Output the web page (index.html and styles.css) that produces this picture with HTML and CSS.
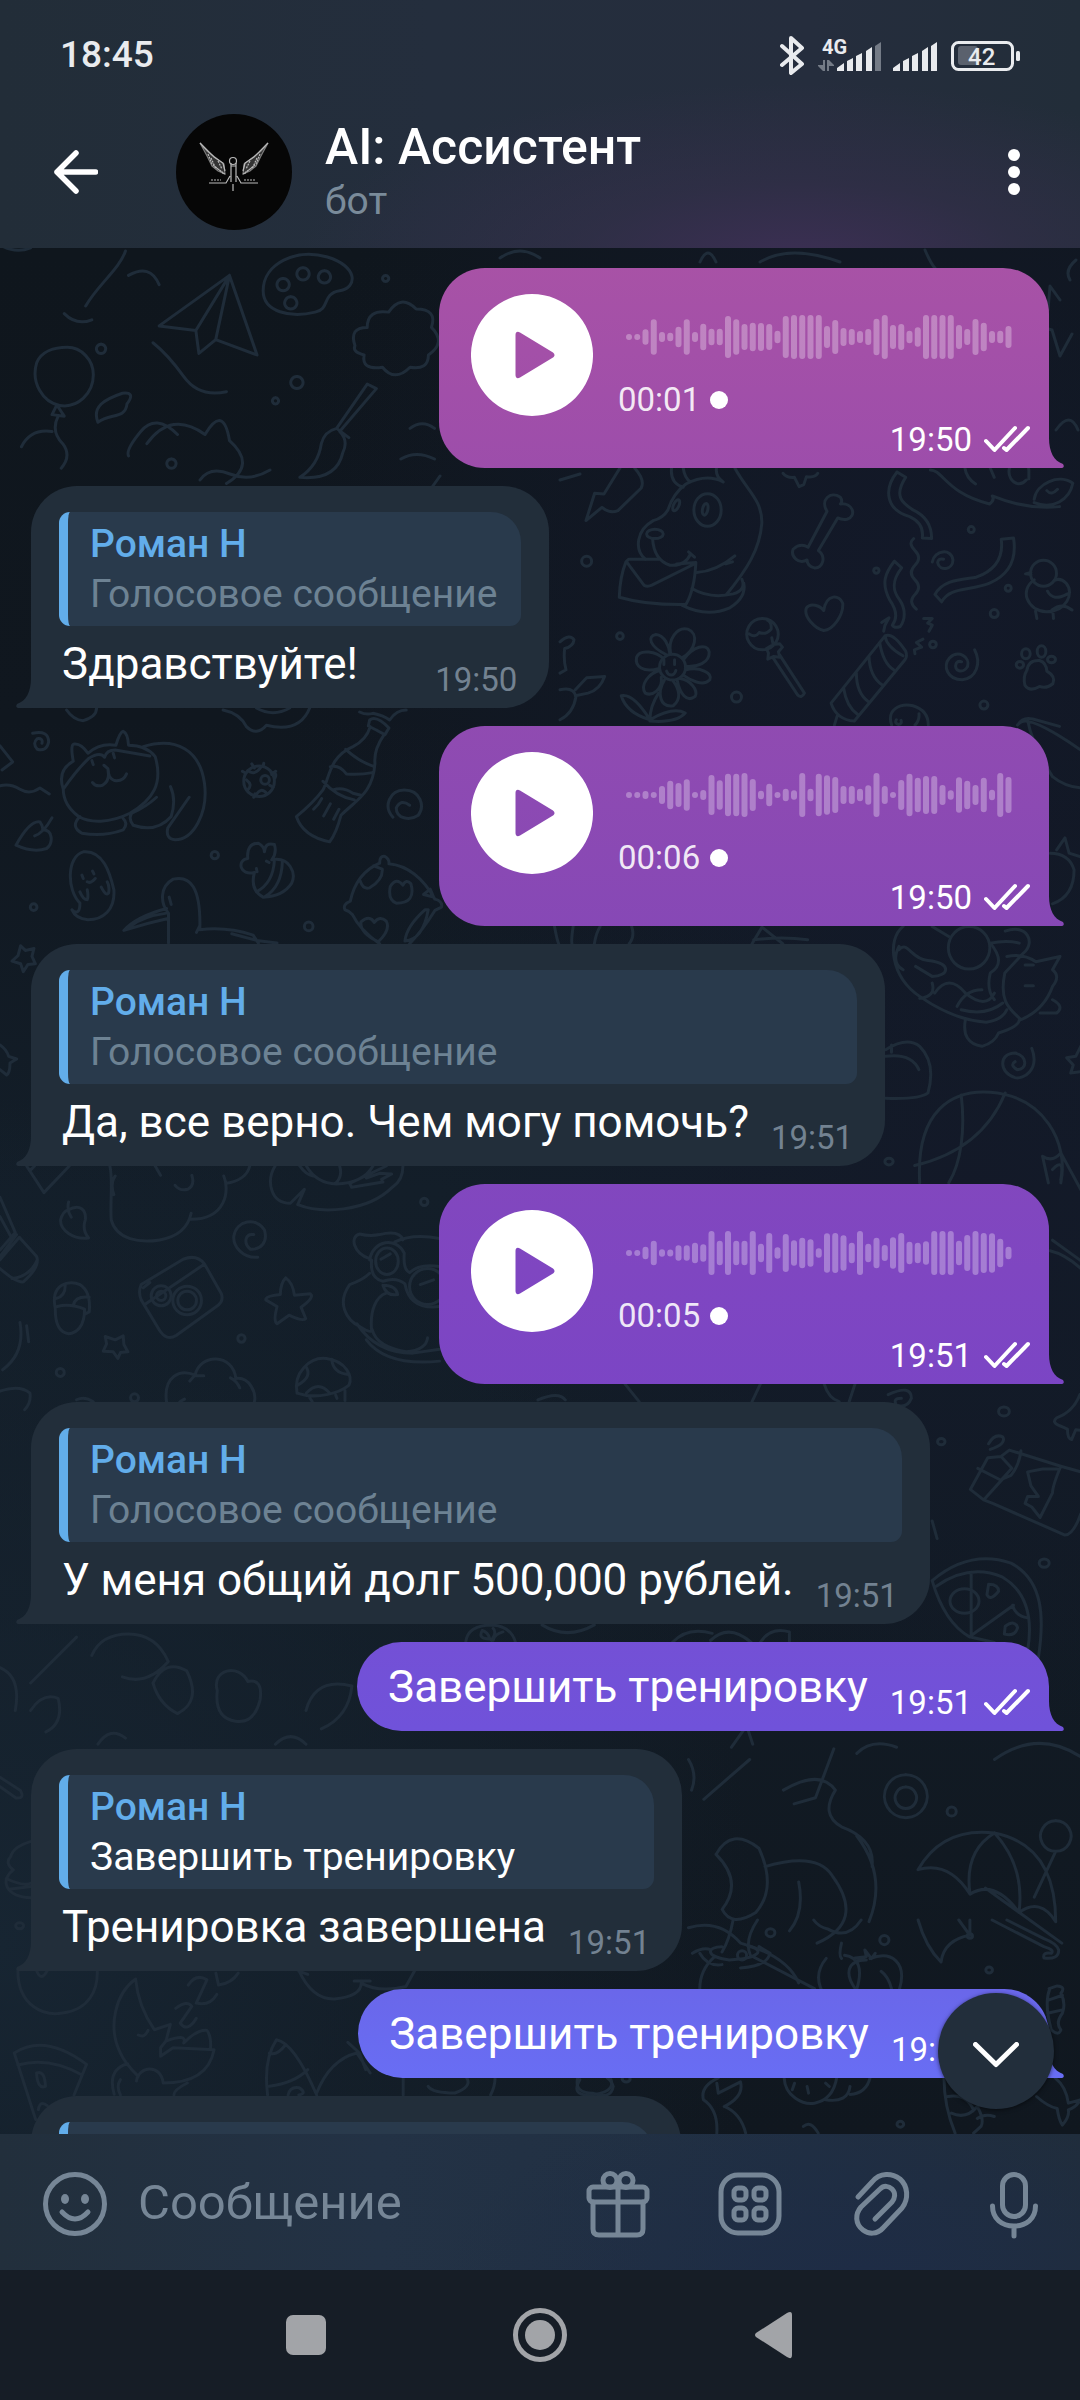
FILE: index.html
```html
<!DOCTYPE html>
<html lang="ru">
<head>
<meta charset="utf-8">
<meta name="viewport" content="width=device-width, initial-scale=1">
<title>AI: Ассистент</title>
<link rel="stylesheet" href="styles.css">
</head>
<body>
<svg class="sprite" aria-hidden="true">
  <symbol id="play" viewBox="0 0 122 122"><path fill="#fff" fill-rule="evenodd" d="M61 0a61 61 0 1 1 0 122a61 61 0 1 1 0-122zM49 38.500C46.500 37 44.500 38 44.500 41V81C44.500 84 46.500 85 49 83.500L82 63.500C84 62 84 60 82 58.500Z"/></symbol>
  <symbol id="checks" viewBox="0 0 46 28"><path fill="none" stroke="#fff" stroke-width="4" stroke-linecap="round" stroke-linejoin="round" d="M2 16L10.500 25L31 3M20 23L22.500 25L44 3"/></symbol>
</svg>

<header class="top">
  <div class="status">
    <time class="clock">18:45</time>
    <svg class="status-icons" viewBox="780 30 242 46" role="img" aria-label="Состояние сети и батареи">
      <path fill="none" stroke="#e9ebee" stroke-width="4" stroke-linejoin="round" stroke-linecap="round" d="M782 44L802 62L791 71V36L802 46L782 63"/>
      <text class="net" x="822" y="52">4G</text>
      <g fill="#747b86"><path d="M818 64L823 69H825V58H823V63H818ZM834 63L829 58H827V69H829V64H834Z"/><path d="M875 44L881 40V69H875Z"/></g>
      <g fill="#e9ebee">
        <path d="M837 66L844 61V69H837ZM847 59L853 56V69H847ZM856 54L862 51V69H856ZM866 49L872 45V69H866Z"/>
        <path d="M893 66L900 61V69H893ZM903 59L909 56V69H903ZM912 54L918 51V69H912ZM922 49L928 45V69H922ZM931 44L937 40V69H931Z"/>
        <rect x="1016" y="49" width="4" height="10" rx="1.500"/>
      </g>
      <rect x="958" y="44" width="20" height="19" rx="3" fill="#5a616d"/>
      <rect x="952.500" y="40.500" width="60" height="27" rx="6" fill="none" stroke="#e9ebee" stroke-width="3"/>
      <text class="charge" x="968" y="63">42</text>
    </svg>
  </div>
  <div class="bar">
    <button class="back" aria-label="Назад"><svg viewBox="0 0 44 44"><path d="M41.500 22H3M22 3L3 22L22 41" fill="none" stroke="#fff" stroke-width="5.500" stroke-linecap="round" stroke-linejoin="round"/></svg></button>
    <svg class="avatar" viewBox="0 0 116 116" aria-hidden="true">
      <circle cx="58" cy="58" r="58" fill="#060606"/>
      <g fill="none" stroke="#b9b9b9" stroke-width="1.200">
        <path fill="#8a8a8a" fill-opacity=".35" stroke-opacity=".6" d="M24 29L31 42L36 52L42 57L49 60L48 50L40 44L31 37ZM92 29L85 42L80 52L74 57L67 60L68 50L76 44L85 37Z"/>
        <path d="M24 29L38 43L47 49L49 57M92 29L78 43L69 49L67 57"/>
        <path d="M32 40L36 50L48 60M35 44L39 53L49 60M42 47L46 55M84 40L80 50L68 60M81 44L77 53L67 60M74 47L70 55" stroke-dasharray="2 1"/>
        <circle cx="57" cy="47" r="3.500"/><path d="M55 52H60M55 49V68M60 49V68M54 62L50 69H33M61 62L65 69H82M57 70V77"/>
        <path d="M35 66H45M68 66H80" stroke-dasharray="2 1"/>
      </g>
    </svg>
    <div class="who"><h1>AI: Ассистент</h1><p>бот</p></div>
    <button class="more" aria-label="Меню"><svg viewBox="0 0 12 46"><g fill="#fff"><circle cx="6" cy="6" r="6"/><circle cx="6" cy="23" r="6"/><circle cx="6" cy="40" r="6"/></g></svg></button>
  </div>
</header>

<main class="chat">
  <svg class="doodles" viewBox="0 248 1080 1886" preserveAspectRatio="xMidYMin slice" aria-hidden="true">
    <g transform="scale(1.530)">
      <path d="M24 237c-4 13 4 26 15 28c12 2 22-8 22-20c0-10-8-18-17-18s-17 3-20 10M37 265l-3 6l8 1l-4-6M38 272q-5 10 3 18q6 8-1 16M0 160q10 6 20 2M56 200c8-14 22-24 26-36M42 205q8 8 18 4M64 276c8-6 18-2 19-12q6-8-3-7c-12 4-20 9-16 19"/>
      <path d="M172 190c0-18 22-28 42-22s20 20 8 22s-6 12-16 14c-16 4-34 0-34-14M185 182a4 4 0 1 0 .1 0M198 175a4 4 0 1 0 .1 0M212 177a4 4 0 1 0 .1 0M190 194a4 4 0 1 0 .1 0"/>
      <path d="M104 213L150 180L168 232L141 222L130 231L128 216ZM128 216L150 180L141 222M100 224q10 8 20 22t28 10"/>
      <path d="M232 226q-4-12 8-12q0-12 14-10q8-12 18-2q14 0 10 12q10 10-2 18q0 10-12 8q-10 10-18 0q-14 2-12-8q-8-2-6-6"/>
      <path d="M240 251l-20 29q-8 2-10 10q-2 14-14 22q24 2 28-16q4-8-2-14l24-28zM220 280l8 6M194 246a4 4 0 1 0 .1 0M14 292q6-12 20-10M96 290q16-22 38-6q12-20 16 4q18 16-2 28M112 300a3 3 0 1 0 .1 0M268 280q8-6 16 0M262 300q10-6 22 0M116 284q-14-14-24-2t-8 16M84 180q14-8 20 6"/>
      <path d="M252 180a2 2 0 1 0 .1 0M66 225a3 3 0 1 0 .1 0M180 260a2 2 0 1 0 .1 0"/>
    </g>
    <g transform="translate(560 460) scale(.333)">
      <path d="M180 24L132 102L104 100L78 182L126 142Q150 162 174 152L244 84Q256 60 224 24"/>
      <path d="M490 66Q440 40 378 72Q340 100 324 150Q310 174 280 182C230 210 222 268 256 298M525 24C560 90 608 120 606 190C600 270 560 330 500 404M410 338Q470 334 525 288M498 312L518 306M335 24Q330 70 370 82M370 24Q374 54 392 66M470 24Q466 50 490 66"/>
      <ellipse cx="443" cy="150" rx="41" ry="49"/><ellipse cx="436" cy="148" rx="8" ry="18" transform="rotate(12 436 148)"/><ellipse cx="349" cy="136" rx="8" ry="18" transform="rotate(25 349 136)"/><ellipse cx="285" cy="222" rx="25" ry="14"/>
      <path d="M278 236Q282 300 330 316Q376 320 392 282M386 276L404 292M206 298H300M350 312L408 308Q404 390 378 434Q260 436 178 412Q180 350 198 306L206 298M200 306L252 376Q262 382 276 376L408 310M396 386Q450 418 520 402Q560 390 546 358M366 436Q440 474 510 444Q560 412 552 370"/>
      <path d="M745 262L802 154C780 120 812 92 842 112Q850 124 842 132C880 128 892 168 862 178Q846 180 834 174L776 272C800 290 790 326 764 324Q742 318 742 300C716 314 692 290 700 268Q722 248 745 262"/>
      <path d="M670 40Q680 54 704 52L718 80L732 74L740 50Q766 54 774 40M1012 36L1038 52C1000 110 1030 130 1060 150Q1116 176 1116 236L1088 234Q1094 190 1050 170C980 150 970 90 1012 36M1062 236q-18 14 4 36t0 44t0 44t0 44t4 44M1004 304L1026 324C990 370 1004 400 1020 420C1040 450 1036 480 1022 500Q1004 506 998 496C1018 470 1004 440 990 420C964 370 976 340 1004 304"/>
      <path d="M1325 238L1362 234C1374 310 1336 350 1290 370C1230 394 1170 380 1146 426L1126 404C1150 360 1200 360 1250 352C1310 330 1332 290 1325 238M1118 306C1124 270 1176 264 1180 300C1180 330 1140 336 1134 308Q1136 294 1152 298"/>
      <path d="M792 452C800 400 840 404 849 430C852 466 820 510 792 512C766 506 730 470 740 444C752 428 780 436 792 452M608 476a47 47 0 1 0 .1 0M568 522q18 14 30-4q20 8 36-10q2-20-10-26M636 534l4 20l20-2l8 10l-12 14l4 16l-18-2l-18 8l2-18l-6-14l14-8M640 594l74 112q12 10 20-6L660 586"/>
      <circle cx="338" cy="622" r="39"/>
      <path d="M318 584C270 560 260 530 288 524C314 526 328 560 330 582M332 580C324 540 350 500 384 508C416 520 410 570 366 594M372 598C400 560 440 548 448 576C450 610 410 622 380 620M378 630C420 620 460 640 450 660C430 682 390 660 370 646M360 656C390 660 416 690 406 710C380 730 360 700 352 662M340 664C360 690 364 720 340 738C300 744 290 700 314 660M304 652C310 690 276 710 256 700C240 676 266 640 300 632M298 626C250 640 224 620 230 592C240 566 290 576 310 596M312 600v14M344 600v14M320 634q4 12 14 12t14-14"/>
      <path d="M976 528Q1000 516 1038 574Q1044 590 1036 600L884 784Q830 780 814 730L976 528Q980 560 1030 588M960 548Q970 610 1002 630M928 590Q930 650 968 676M890 640Q890 700 926 726M852 686Q860 740 894 764M832 770L824 796M966 488l22-14l-12 22l-4 18M1092 476h26l-14 14l14 6l-10 18M1090 538l-20 10l16 14l-22 8l2 12"/>
      <path d="M1245 570C1266 610 1250 656 1208 660C1164 660 1148 620 1170 594C1196 570 1232 590 1224 620C1210 644 1180 634 1190 610Q1196 602 1206 606"/>
      <circle cx="1452" cy="340" r="39"/><path d="M1424 360C1380 390 1400 450 1460 456C1520 456 1546 400 1520 370Q1502 352 1484 362M1414 338L1398 342L1414 344M1464 394Q1480 426 1524 402M1428 454l4 22M1480 454l2 22M1400 60a30 36 0 1 1 8-30v26M1424 118C1430 70 1500 40 1540 70C1530 120 1480 150 1424 128M1112 30C1150 30 1160 100 1290 132Q1306 120 1298 108Q1400 150 1500 140M1216 24q4 30 32 48M1292 24l12 28M1462 92q14 16 32-4"/>
      <path d="M1402 632Q1406 600 1440 602Q1460 608 1462 634Q1490 650 1480 672Q1460 688 1440 680Q1410 698 1396 676Q1390 650 1402 632"/><ellipse cx="1381" cy="615" rx="11" ry="10"/><ellipse cx="1399" cy="582" rx="13" ry="15"/><ellipse cx="1446" cy="575" rx="13" ry="17"/><ellipse cx="1476" cy="599" rx="12" ry="10"/>
      <path d="M996 796C980 750 1020 730 1060 738Q1106 752 1106 796M1010 780q-6 10 6 14q12-2 8-12M1078 762q2 20-12 34M1374 796Q1390 770 1420 778L1500 800M270 780Q200 760 184 708Q220 700 270 780Q270 740 296 700M270 780Q340 740 376 760Q350 790 270 784M0 546Q30 520 42 540Q40 560 14 566Q10 600 18 630L0 640M0 690Q40 680 48 710Q40 760 0 780M46 690L80 654L134 650Q120 690 84 700L46 708"/>
      <circle cx="80" cy="304" r="15"/><circle cx="180" cy="529" r="10"/><circle cx="530" cy="712" r="15"/><circle cx="950" cy="332" r="8"/><circle cx="1120" cy="554" r="10"/><circle cx="1235" cy="209" r="9"/><circle cx="1346" cy="385" r="9"/><circle cx="1304" cy="461" r="12"/><circle cx="1273" cy="736" r="12"/>
    </g>
    <g transform="translate(0 700) scale(.333)">
      <path d="M190 268C170 210 210 190 220 184Q210 130 224 132Q244 130 264 160Q300 128 348 136Q360 96 370 94Q384 100 386 136Q440 136 466 170C490 250 460 300 390 340C330 370 270 370 236 350C210 330 190 300 190 268Q230 210 266 176Q300 154 314 172Q320 150 346 150L450 168M430 140C530 110 600 150 614 250C626 340 580 420 526 420Q496 416 504 384L568 292M512 260Q530 300 514 350Q470 400 400 376Q384 356 396 340Q440 320 470 292M240 350Q210 380 246 400Q310 412 370 390Q386 370 370 356M276 182l4 12M340 160l4 14M312 196l12 10q8 36-16 50q-20 6-30-8M324 206q0 30 20 36q26 4 36-20"/>
      <path d="M98 100Q146 90 146 126Q140 156 112 148Q96 130 112 116Q130 114 126 130M0 138L38 186L6 210M0 258Q30 250 60 268T120 264L148 282M48 436Q90 360 120 366Q130 380 128 390C160 390 160 430 140 446Q100 460 48 436M104 408Q130 400 156 354"/>
      <path d="M216 630Q240 650 240 610C200 570 200 470 250 456C310 450 330 520 342 570C346 630 310 660 264 660Q226 656 216 630M246 526l4 10M278 514l4 8M262 546q10 6 24-10M240 576Q250 600 262 600Q266 590 262 570M304 562Q318 590 326 580Q330 560 322 546M506 730V640C480 610 480 560 520 538C570 526 604 560 600 690Q680 680 760 706L776 730M500 626Q410 650 372 692Q440 670 504 656M500 640Q430 650 390 680M508 592l6 22M590 698l10-20M696 702L770 722L832 730"/>
      <circle cx="778" cy="244" r="46"/><circle cx="796" cy="240" r="13"/><path d="M744 212q20 16 38-8M740 240q20 14 4 30M768 288q14-30 34-6M756 192l8 12M792 190l-2 10M828 214l-12 10M820 262l-10-6M762 292l4-10M728 214l10 6M814 218q20 0 12 16"/>
      <path d="M1110 60Q1130 44 1168 84L1156 104Q1140 96 1130 90L1106 78ZM1112 80Q1100 120 1060 140C990 170 990 230 970 270Q940 310 890 350Q910 410 990 426Q1010 400 1024 346C1070 300 1120 280 1126 190Q1122 150 1152 106M1038 148Q1080 186 1124 200M992 200Q1020 194 1040 222Q1080 226 1118 218M970 244Q1010 290 1064 300M1000 270Q1030 260 1060 280L1084 286M966 296q-10 20-24 32M992 312l-20 36M1018 328l-16 30M670 30Q720 40 740 80Q770 110 800 76Q900 100 930 24M770 24Q820 52 870 24M1080 36Q1100 46 1120 40Q1150 46 1170 60Q1190 30 1220 30M200 30Q220 60 250 62Q290 50 290 24"/>
      <path d="M1180 352C1150 320 1170 270 1214 270C1264 270 1276 320 1256 346C1230 364 1190 356 1190 324Q1204 296 1230 316M764 518C720 530 710 480 744 476Q740 430 776 430Q794 440 794 456Q796 426 824 434Q832 460 816 480C870 470 890 520 876 550Q850 590 790 592Q750 570 764 518M824 482Q820 550 770 576M848 484Q846 560 796 590M770 506l2 10M800 484l8 4"/>
      <path d="M1140 490Q1140 466 1156 470Q1170 478 1168 492Q1250 500 1306 598Q1330 604 1326 622L1306 632Q1270 690 1230 732M1140 490Q1070 520 1052 604Q1028 614 1036 630Q1050 634 1058 644Q1080 690 1140 732M1210 556Q1220 536 1234 552Q1250 610 1190 610Q1164 600 1172 560Q1190 530 1210 556M1124 668Q1140 646 1160 664Q1174 690 1136 726Q1080 700 1084 666Q1110 644 1124 668M1082 544Q1090 570 1110 564Q1150 540 1148 508L1122 498M1276 630Q1220 680 1216 724Q1270 720 1286 630ZM1272 584l20-16l10 24ZM62 738l14 14l26-6l-6 24l10 22l-22 2l-14 22l-8-24l-26-8l18-16ZM0 1036Q20 1050 26 1070L50 1078L30 1090Q30 1120 20 1126L0 1110"/>
      <circle cx="645" cy="466" r="11"/><circle cx="927" cy="680" r="13"/><circle cx="101" cy="622" r="10"/>
    </g>
    <g transform="translate(0 1160) scale(.333)">
      <path d="M80 18L132 98L208 18M90 32L104 18M330 18C340 60 330 130 334 180C350 240 420 250 480 240Q560 226 574 160M346 48Q330 70 342 104M466 18l16 28M526 76Q540 94 564 88Q586 76 576 46M672 48C690 90 680 180 570 178M680 70Q740 60 750 18M826 18C800 60 810 130 872 130L914 88L894 134C960 160 1100 160 1180 80Q1210 60 1210 18M900 18Q920 46 940 48M920 18Q950 70 1010 72Q1090 70 1120 18M1020 18Q1030 50 1006 72M1160 18L1050 70L1056 82L1150 66L1146 58L1176 42L1140 40L1100 54"/>
      <path d="M206 126Q200 150 214 172M204 150C240 130 260 150 256 180Q246 210 266 234C220 240 180 210 182 180Q188 156 204 150M0 112L46 218L0 270M0 170L36 236M0 300L58 232L110 290Q122 320 70 366Q50 370 0 326M0 290L50 224M36 356Q90 350 112 300"/>
      <path d="M774 292C730 296 700 260 702 230C710 180 770 170 794 210C806 250 780 270 752 268C730 250 736 220 762 224M424 374L550 298Q590 282 614 312L664 400Q674 424 650 440L530 526Q500 546 478 510L424 420Q414 396 424 374M438 432L612 314M430 384l20-16"/>
      <circle cx="484" cy="408" r="30"/><circle cx="484" cy="408" r="14"/><circle cx="562" cy="422" r="43"/><circle cx="562" cy="422" r="28"/>
      <path d="M166 446C150 370 210 360 240 374Q274 396 268 456L256 462M172 440Q210 430 254 448C254 500 230 520 206 522Q166 516 166 450M168 416Q196 410 196 376M220 436Q226 408 268 412"/>
      <path d="M858 354Q880 370 884 406L932 402Q946 412 904 442L918 476Q910 486 868 466L832 492Q820 484 832 440L798 420Q798 408 842 404Q842 370 858 354M346 540l24-12l2 26l12 22l-22 2l-8 18l-14-20l-30-2l10-22l-4-22Z"/>
      <path d="M60 488Q76 580 8 630M80 498l6 48M0 694Q60 674 90 700Q94 730 74 750M500 726C490 650 540 626 586 646C600 580 700 580 708 656M586 646L570 664M586 648h26M708 656C750 650 770 700 764 726M692 654Q710 662 720 684M540 726l14-8M230 720Q254 708 280 726"/>
      <path d="M892 700C880 640 930 590 980 596C1040 604 1060 650 1048 676C1020 700 950 720 892 700M894 676Q940 650 918 620M996 598Q1000 640 1046 644M920 700Q956 660 990 700M930 714l8 12M1036 692v30M1008 706l4 10"/>
      <path d="M1110 296C1060 280 1050 230 1080 222Q1110 230 1140 224Q1200 210 1210 240M1186 246Q1240 220 1320 236M1110 300C1120 240 1190 230 1214 280Q1210 330 1230 338Q1260 310 1320 320M1116 300Q1110 356 1150 364Q1190 350 1216 372Q1230 450 1320 440M1110 340Q1090 360 1050 374C1010 430 1040 480 1080 500Q1110 520 1116 512C1110 450 1130 410 1160 400M1072 492Q1130 580 1240 580L1320 568M1100 540Q1160 620 1320 604M1118 510Q1130 560 1220 576Q1280 570 1284 534M1150 376Q1190 376 1194 404Q1160 410 1150 376"/>
      <ellipse cx="1162" cy="304" rx="34" ry="40"/><circle cx="1284" cy="380" r="54"/><path d="M1144 298l28-16M1262 374l40-14"/>
      <circle cx="1274" cy="126" r="11"/><circle cx="725" cy="536" r="11"/><circle cx="181" cy="638" r="12"/><circle cx="404" cy="714" r="12"/>
    </g>
    <g transform="translate(430 710) scale(.415 .333)">
      <path d="M1140 650C1100 690 1110 800 1180 860Q1260 930 1340 938Q1380 930 1390 900M1130 720C1150 690 1160 750 1200 752C1260 760 1250 800 1210 800L1170 770M1130 710Q1110 760 1140 780M1180 866Q1220 860 1210 820M1210 650L1250 680M1350 700Q1390 690 1420 700M1386 664C1440 640 1460 700 1430 730Q1400 770 1385 790C1370 880 1400 900 1424 930Q1480 900 1500 830Q1520 800 1500 780L1518 740L1460 756Q1430 730 1390 740M1290 930Q1280 1000 1330 1010Q1360 1000 1370 970Q1420 950 1420 930M1216 850Q1250 790 1290 850Q1340 900 1360 850M1270 890Q1290 840 1330 840M1280 900Q1340 920 1380 880M1350 700Q1390 760 1350 790Q1340 840 1360 870M1500 870Q1530 890 1510 910L1470 910M1434 766h20M1434 828h20"/>
      <ellipse cx="1299" cy="714" rx="50" ry="64"/>
      <path d="M1098 1040Q1160 1030 1178 1080M1098 1020Q1150 980 1180 1010Q1220 1060 1200 1150Q1180 1170 1098 1166M1112 1006v22M1450 1016C1470 1080 1430 1110 1410 1104C1370 1090 1370 1030 1410 1030C1440 1040 1440 1080 1415 1080Q1396 1066 1410 1056M1568 1010L1556 1040L1534 1044L1550 1066L1544 1090L1568 1086M1180 1420C1170 1200 1260 1140 1350 1148C1480 1160 1540 1300 1520 1420M1280 1156C1290 1260 1280 1360 1250 1420M1386 1150Q1330 1320 1168 1368M1476 1340Q1500 1360 1520 1330L1568 1440M1476 1340L1490 1420"/>
      <circle cx="1106" cy="1356" r="10"/>
      <path d="M300 650Q306 690 310 702M345 650Q340 690 342 702M396 702Q400 670 410 650M486 650Q494 680 480 702M776 702L800 652L850 702M780 690Q850 680 910 690M1494 430Q1540 430 1552 480Q1552 560 1500 582M1510 420L1530 384L1540 430L1566 440M1420 40Q1440 10 1568 120M1440 30Q1450 100 1500 200Q1530 230 1568 234M1500 1380Q1530 1340 1520 1410"/>
    </g>
    <g transform="translate(430 1170) scale(.415 .351)">
      <path d="M1494 230Q1530 240 1568 280M1500 200L1568 258M1566 640Q1550 690 1510 706Q1496 720 1520 730L1536 738Q1536 766 1546 768L1556 740L1568 742M1346 780Q1360 750 1380 760Q1390 780 1350 796M1344 820L1376 816L1396 798L1520 844L1568 860M1344 820L1302 910L1334 940L1356 950L1530 1040Q1550 1040 1568 980M1334 940L1380 880L1400 870Q1420 840 1424 800M1320 850L1376 884L1402 850L1376 816M1520 844Q1500 900 1500 920L1470 990L1450 960L1434 950L1440 930L1466 930L1448 900L1440 860L1476 852H1512M1210 1170Q1300 1080 1400 1120C1480 1170 1480 1280 1466 1390M1220 1186Q1300 1120 1380 1160C1450 1210 1450 1300 1440 1370M1210 1170Q1240 1290 1300 1330L1360 1346M1304 1146V1330M1300 1330L1406 1240M1346 1180Q1370 1180 1370 1200Q1350 1230 1342 1210ZM1386 1300Q1410 1280 1416 1304Q1410 1330 1384 1322ZM1404 1240Q1410 1270 1440 1276M1210 1000L1222 1050"/><circle cx="1288" cy="1228" r="35"/><circle cx="1383" cy="688" r="13"/><circle cx="1232" cy="774" r="9"/><circle cx="1480" cy="1120" r="12"/>
      <path d="M86 1346Q90 1296 150 1296Q196 1300 206 1346M126 1312q14 4 18 24q-30 0-18-24M152 1306q10 10-4 34M176 1316q-20 6-24 24M584 1346Q620 1300 680 1320M676 1340Q720 1290 774 1346M796 1346Q820 1300 866 1316V1346M270 1296Q330 1340 396 1296M260 655Q310 630 326 655M470 610L504 660M796 610L776 660M950 610Q960 650 986 660M1024 610L1010 660M1104 640Q1160 610 1160 650Q1150 680 1124 670Q1114 650 1136 650"/>
    </g>
    <g transform="scale(1.530)">
      <path d="M0 1090q14 6 10 28M20 1100l30-30M60 1082q6-14 24-14t26 18q-14 16-30 10M142 1105c-4-14 14-18 20-6q10-2 8 12q-4 16-16 14q-14-2-12-20M200 1118q6-22 30-16q-2 20-20 28M100 1100q8-16 22-8q10 20-6 28q-12-6-16-20M20 1118q8-12 18-8q4 16-8 22M180 1140q10-10 20 0M64 1140q8-12 18-4"/>
      <path d="M478 1142l10-14l4 12M545 1143l-12 32l-14 4M560 1146q10-10 26-4M592 1160a14 14 0 1 0 .1 0M592 1168a7 7 0 1 0 .1 0M460 1176l30-26M650 1150q28-20 56-2M468 1212q10-18 28-4q12 26-2 42q-16 10-22-2q14-18-4-36M500 1220q34-10 44 6q22 30-10 44M512 1170q24-14 34 0q-10 16 4 24q22 8 20 26M560 1200q20 26 8 56M450 1150q6 10 2 20"/>
      <path d="M600 1222Q616 1194 650 1198Q690 1206 690 1256Q680 1240 666 1250Q650 1228 634 1238Q620 1216 600 1222M650 1198Q630 1210 634 1238M650 1198Q670 1220 666 1250M644 1234L694 1270M690 1190a10 10 0 1 0 .1 0M690 1210L676 1240M450 1260q20-6 34 10q30 8 38 26M540 1280q-10 12 0 26q14 6 20-6q6-20-8-22M550 1270q-2 8 0 10M522 1230q4 20-6 32"/>
      <circle cx="622" cy="1184" r="3"/><circle cx="578" cy="1268" r="3"/><circle cx="485" cy="1278" r="3"/>
    </g>
    <g transform="translate(0 1740) scale(.446 .333)">
      <path d="M0 112L46 152Q56 176 36 174L0 140M68 305Q30 320 24 350Q10 370 30 390C0 420 10 470 70 474M14 416Q50 440 70 430M20 448L70 440M40 692C40 800 100 830 140 820C200 810 220 750 218 692M82 692q10 36 24 0M304 718C260 760 240 860 270 940Q280 970 310 1010M304 718Q310 800 346 870L382 854L372 904L360 924V950L388 924L480 930C470 1000 430 1030 366 1030M372 904Q420 880 412 910Q440 870 464 872Q474 890 472 926M310 886q14 10 22-14M256 1064Q240 990 286 972M306 1024C310 980 360 970 366 1030M270 1020Q260 1040 270 1066M420 1030Q390 1050 390 1066M422 736Q440 700 464 720L440 790Q470 800 486 764M394 806Q420 780 430 800L404 850Q420 880 440 836M484 700L490 736Q520 730 534 700"/>
      <path d="M32 940Q100 880 194 974L166 1066M32 940L80 1140M40 976Q110 950 184 1006M82 1000Q100 990 102 1040Q84 1050 82 1000M86 1110q4-30 20-12M670 692Q700 780 750 778Q810 770 810 730Q850 760 910 740L930 692M690 704l-20-10M794 724h36M600 1066Q590 960 620 900Q660 910 710 1066M604 940Q620 950 640 916M604 1040Q660 1030 690 990M710 1060Q740 960 800 940M780 908L806 940L820 990M800 940L830 1000M646 1066Q650 1040 670 1044Q690 1060 670 1066M904 1014V1066M960 1040Q970 1060 1020 1060Q1060 1040 1046 1014M1110 1014Q1110 1040 1100 1066M1300 1020Q1280 1066 1320 1066Q1380 1060 1370 1020"/>
      <circle cx="44" cy="558" r="9"/><circle cx="1404" cy="1018" r="9"/>
    </g>
    <g transform="translate(500 1920) scale(.370 .333)">
      <path d="M630 0Q620 60 600 96M696 0Q660 60 676 104M600 80C560 80 550 110 620 120C700 116 720 90 670 78M520 100Q550 80 570 90M540 100Q560 140 600 134M650 144Q720 140 730 100L700 80M540 206Q540 150 580 110M680 108L850 206M990 120C940 120 930 160 960 206M1000 116C1060 90 1100 130 1080 206M990 120L960 114L990 110L986 90L1004 116L1014 100M1030 154Q1050 170 1058 206M1130 0Q1150 80 1192 126Q1200 60 1270 46L1240 0M1270 46V0M1330 0L1470 80Q1500 90 1490 100Q1466 96 1470 114Q1510 120 1510 90Q1504 70 1470 56L1370 0M848 0Q860 20 888 28Q940 60 976 0M1486 206Q1470 250 1490 330Q1510 350 1516 330Q1500 310 1520 280Q1530 250 1516 220Q1530 200 1506 198L1484 206M1484 240l36-14M1480 280l40-10M486 660"/>
      <path d="M586 640Q590 570 550 540Q540 500 590 474M590 520L650 486Q660 530 606 560Q650 580 664 640M590 520L586 490M768 474C770 530 820 556 850 550Q900 540 910 474M880 540Q940 550 946 500M946 524Q990 520 1000 474M1200 474Q1200 560 1230 640M1210 530Q1260 520 1280 570M1220 580Q1260 600 1290 560Q1310 600 1300 620L1280 640M1290 596Q1310 580 1336 590M1450 530Q1480 560 1506 566Q1510 600 1520 616Q1540 590 1536 570Q1560 560 1568 540L1536 550Q1530 500 1500 474M820 620Q840 600 860 640M796 490l-6 20M830 500l4 20M880 490l10 10M210 474Q200 520 250 520Q300 540 306 500Q300 480 290 474"/>
      <circle cx="731" cy="38" r="12"/><circle cx="1322" cy="150" r="9"/><circle cx="1082" cy="613" r="9"/><circle cx="1270" cy="48" r="7"/>
    </g>
    <path d="M500 258q20-14 40 0M700 262q8-18 16 0M760 262q30-18 80 0M925 250q6 14 10 18M1060 300l-10-14l-2 24l-18 14l22 6l8 26l12-22M430 490l10-14M560 480l20-6M1070 280q-6-10 6-20M432 590q8 4 6 14t-10 4M200 480q10-14 30-6t40-4M1056 430q14-20 22 0M1052 610q10-8 20 0"/>
  </svg>

  <article class="msg out voice">
    <div class="voice-row"><button class="play" aria-label="Воспроизвести"><svg><use href="#play"/></svg></button>
      <div class="track"><svg class="wave" viewBox="0 0 388 44" data-levels="16 16 46 106 30 26 62 106 30 80 50 50 126 106 78 86 84 78 38 126 132 132 132 132 66 102 54 48 36 48 110 132 72 78 38 58 132 132 132 132 72 48 108 86 36 38 66"></svg><span class="length">00:01</span></div></div>
    <footer><time>19:50</time><svg class="checks"><use href="#checks"/></svg></footer>
  </article>

  <article class="msg in">
    <blockquote><cite>Роман Н</cite><span class="muted">Голосовое сообщение</span></blockquote>
    <div class="line"><p>Здравствуйте!</p><time>19:50</time></div>
  </article>

  <article class="msg out voice">
    <div class="voice-row"><button class="play" aria-label="Воспроизвести"><svg><use href="#play"/></svg></button>
      <div class="track"><svg class="wave" viewBox="0 0 388 44" data-levels="16 16 24 18 54 86 72 94 18 30 120 88 128 128 132 96 26 68 18 38 28 132 38 128 118 108 54 54 38 58 132 54 18 90 128 104 114 114 60 28 106 86 60 104 32 132 108"></svg><span class="length">00:06</span></div></div>
    <footer><time>19:50</time><svg class="checks"><use href="#checks"/></svg></footer>
  </article>

  <article class="msg in">
    <blockquote><cite>Роман Н</cite><span class="muted">Голосовое сообщение</span></blockquote>
    <div class="line"><p>Да, все верно. Чем могу помочь?</p><time>19:51</time></div>
  </article>

  <article class="msg out voice">
    <div class="voice-row"><button class="play" aria-label="Воспроизвести"><svg><use href="#play"/></svg></button>
      <div class="track"><svg class="wave" viewBox="0 0 388 44" data-levels="16 16 38 74 23 21 46 46 61 53 132 74 132 74 74 132 55 120 34 114 76 91 82 29 118 120 106 61 132 55 91 48 95 120 67 61 70 132 132 132 74 108 132 120 118 85 38"></svg><span class="length">00:05</span></div></div>
    <footer><time>19:51</time><svg class="checks"><use href="#checks"/></svg></footer>
  </article>

  <article class="msg in">
    <blockquote><cite>Роман Н</cite><span class="muted">Голосовое сообщение</span></blockquote>
    <div class="line"><p>У меня общий долг 500,000 рублей.</p><time>19:51</time></div>
  </article>

  <article class="msg out">
    <div class="line"><p>Завершить тренировку</p><time>19:51</time><svg class="checks"><use href="#checks"/></svg></div>
  </article>

  <article class="msg in">
    <blockquote><cite>Роман Н</cite><span>Завершить тренировку</span></blockquote>
    <div class="line"><p>Тренировка завершена</p><time>19:51</time></div>
  </article>

  <article class="msg out">
    <div class="line"><p>Завершить тренировку</p><time>19:</time><svg class="checks covered" aria-hidden="true"></svg></div>
  </article>

  <article class="msg in next"><blockquote></blockquote></article>

  <button class="down" aria-label="Вниз"><svg viewBox="0 0 46 26"><path d="M2.500 2.500L23 22.500L43.500 2.500" fill="none" stroke="#fff" stroke-width="5" stroke-linecap="round" stroke-linejoin="round"/></svg></button>
</main>

<form class="composer">
  <button type="button" class="smile" aria-label="Эмодзи"><svg viewBox="0 0 72 72"><circle cx="36" cy="36" r="29.500"/><path d="M23 44Q36 58 49 44"/><g fill="#768696" stroke="none"><ellipse cx="26" cy="31" rx="4" ry="5"/><ellipse cx="46" cy="31" rx="4" ry="5"/></g></svg></button>
  <input type="text" placeholder="Сообщение" aria-label="Сообщение">
  <button type="button" aria-label="Подарок"><svg viewBox="0 0 72 72"><rect x="7" y="19" width="58" height="15" rx="4"/><path d="M11 34V61Q11 67 17 67H55Q61 67 61 61V34M36 19V67"/><circle cx="28" cy="12.500" r="7"/><circle cx="44" cy="12.500" r="7"/></svg></button>
  <button type="button" aria-label="Команды"><svg viewBox="0 0 72 72"><rect x="7" y="7" width="58" height="58" rx="17"/><rect x="20" y="20" width="12" height="12" rx="4"/><rect x="40" y="20" width="12" height="12" rx="4"/><rect x="20" y="40" width="12" height="12" rx="4"/><rect x="40" y="40" width="12" height="12" rx="4"/></svg></button>
  <button type="button" aria-label="Прикрепить"><svg viewBox="0 0 72 72"><path d="M12 29L26 14C34 4 46 5 54 11C62 18 63 31 56 40L37 60C31 67 22 66 17 62C9 56 9 46 15 39L34 21C38 17 43 18 46 21C50 25 49 30 46 34L29 51"/></svg></button>
  <button type="button" aria-label="Голосовое сообщение"><svg viewBox="0 0 72 72"><rect x="24.500" y="6.500" width="23" height="42" rx="11.500"/><path d="M14.500 38C14.500 51 24 58 36 58S57.500 51 57.500 38M36 58V68"/></svg></button>
</form>

<nav class="system">
  <button aria-label="Недавние"><svg viewBox="0 0 56 56"><rect x="8" y="8" width="40" height="40" rx="7"/></svg></button>
  <button aria-label="Домой"><svg viewBox="0 0 56 56"><circle cx="28" cy="28" r="15"/><circle cx="28" cy="28" r="24.500" fill="none" stroke="#a2a4a8" stroke-width="5"/></svg></button>
  <button aria-label="Назад"><svg viewBox="0 0 56 56"><path d="M10 26Q8 28 10 30L41 50Q46 53 46 48V8Q46 3 41 6Z"/></svg></button>
</nav>
<script src="wave.js"></script>
</body>
</html>
```
FILE: styles.css
```css
* { box-sizing: border-box; }

body {
  margin: 0;
  height: 100vh;
  display: flex;
  flex-direction: column;
  overflow: hidden;
  background: #161d26;
  color: #fff;
  font-family: Roboto, "Noto Sans", sans-serif;
}

h1, p, blockquote { margin: 0; }
h1, cite { font-weight: 500; font-style: normal; }
button { border: 0; padding: 0; background: none; display: grid; place-items: center; }
svg { display: block; }
.sprite { display: none; }

/* Header */
.top {
  flex: none;
  background:
    radial-gradient(ellipse 500px 180px at 74% 106%, #3c2f54 0%, #382f4e80 45%, transparent 100%),
    linear-gradient(90deg, #222d38 0%, #242e3d 40%, #252d3d 75%, #222d39 100%);
}
.status {
  height: 96px;
  padding: 14px 58px 0 60px;
  display: flex;
  align-items: center;
  justify-content: space-between;
}
.clock { font-size: 37px; line-height: 40px; font-weight: 500; color: #e9ebee; }
.status-icons { width: 242px; height: 46px; }
.status-icons text { fill: #e9ebee; }
.net { font-size: 20px; font-weight: 700; }
.charge { font-size: 24px; font-weight: 500; }
.bar { height: 152px; display: flex; align-items: center; padding: 0 60px 0 54px; }
.back { width: 44px; height: 44px; margin-right: 78px; }
.back svg { width: 44px; height: 44px; }
.avatar { width: 116px; height: 116px; margin-right: 33px; flex: none; }
.who { flex: 1; min-width: 0; padding-bottom: 4px; }
.who h1 { font-size: 50px; line-height: 62px; }
.who p { font-size: 39px; line-height: 46px; color: #7a8b9a; }
.more svg { width: 12px; height: 46px; }

/* Conversation */
.chat {
  position: relative;
  flex: 1;
  min-height: 0;
  overflow: hidden;
  display: flex;
  flex-direction: column;
  gap: 18px;
  padding: 20px 31px 0;
  background:
    radial-gradient(ellipse 70% 45% at 0% 90%, #172532 0%, transparent 100%),
    radial-gradient(ellipse 60% 36% at 85% 18%, #131929 0%, transparent 100%),
    radial-gradient(ellipse 50% 30% at 90% 50%, #131928 0%, transparent 100%),
    linear-gradient(#0f161d 0%, #10171f 25%, #131e29 50%, #10171f 100%);
}
.doodles {
  position: absolute;
  inset: 0;
  width: 100%;
  height: 100%;
  fill: none;
  stroke: #1f2c39;
  stroke-width: 3;
  stroke-linecap: round;
  stroke-linejoin: round;
}
.doodles * { vector-effect: non-scaling-stroke; }

.msg { position: relative; flex: none; max-width: 100%; }
.msg time { font-size: 33px; line-height: 40px; }
.msg::after { content: ""; position: absolute; bottom: 0; width: 15px; height: 30px; background: inherit; }

.in {
  align-self: flex-start;
  padding: 26px 28px 8px;
  border-radius: 46px 46px 46px 0;
  background: #222e3a;
}
.in::after { right: 100%; clip-path: path("M15 0C15 14 10 23 1 26Q-1 29 2 30H15Z"); }
.in time { color: #738291; }

.out {
  align-self: flex-end;
  padding: 19px 19px 8px 28px;
  border-radius: 46px 46px 0 46px;
  background: linear-gradient(#a852a6 11%, #9c4dab 20%, #904bb1 30%, #8648b6 39%, #8247be 49%, #7b45c5 58%, #7450d5 68%, #7052da 72%, #6a67ea 83%, #686ef5 87%) fixed;
}
.out::after { left: 100%; clip-path: path("M0 0C0 14 5 23 14 26Q16 29 13 30H0Z"); }

.line { display: flex; align-items: flex-end; justify-content: space-between; padding: 12px 4px 0 3px; }
.out .line { padding: 0 0 0 3px; }
.line p { font-size: 44px; line-height: 52px; padding-bottom: 10px; margin-right: 22px; }

blockquote {
  min-height: 114px;
  padding: 7px 24px 7px 22px;
  border-left: 9px solid #62adea;
  border-radius: 11px 30px 11px 11px;
  background: #293a4c;
  font-size: 39px;
  line-height: 50px;
}
blockquote > * { display: block; }
cite { color: #62adea; }
.muted { color: #6d8293; }
.next { width: 650px; }

.voice { width: 610px; padding: 26px 19px 8px 32px; }
.voice-row { display: flex; gap: 25px; }
.play, .play svg { width: 122px; height: 122px; }
.track { padding-top: 21px; height: 126px; }
.wave {
  width: 388px;
  height: 44px;
  margin: 0 0 21px 8px;
  fill: none;
  stroke: #fff;
  stroke-opacity: .3;
  stroke-width: 6;
  stroke-linecap: round;
}
.length { display: flex; align-items: center; gap: 10px; font-size: 33px; line-height: 40px; color: #ffffffe0; }
.length::after { content: ""; width: 18px; height: 18px; border-radius: 50%; background: #fff; }
footer { display: flex; justify-content: flex-end; }
.checks { width: 46px; height: 28px; margin: 5px 0 0 12px; }
.line .checks { margin-bottom: 7px; }
.line .covered { width: 82px; }

.down {
  position: absolute;
  right: 26px;
  bottom: 25px;
  width: 116px;
  height: 116px;
  border-radius: 50%;
  background: #222e3b;
  box-shadow: 0 1px 4px #0008;
}
.down svg { width: 46px; height: 26px; margin-top: 8px; }

/* Message field */
.composer {
  flex: none;
  height: 136px;
  display: flex;
  align-items: center;
  padding: 4px 0 0 39px;
  background:
    radial-gradient(ellipse 420px 180px at 80% 100%, #1e2c45 0%, transparent 100%),
    linear-gradient(90deg, #222f3c 0%, #233245 35%, #202f42 75%, #202d3b 100%);
}
.composer button { width: 132px; flex: none; }
.composer .smile { width: 72px; margin-right: 27px; }
.composer svg { width: 72px; height: 72px; fill: none; stroke: #768696; stroke-width: 5; stroke-linecap: round; stroke-linejoin: round; }
.composer input {
  flex: 1;
  min-width: 0;
  padding: 0 0 2px;
  border: 0;
  outline: 0;
  background: none;
  color: #fff;
  font: 400 49px/60px Roboto, "Noto Sans", sans-serif;
}
.composer input::placeholder { color: #768696; opacity: 1; }

/* System buttons */
.system { flex: none; height: 130px; display: flex; justify-content: center; background: #161d26; }
.system button { width: 234px; }
.system svg { width: 56px; height: 56px; fill: #a2a4a8; }
```
FILE: wave.js
```js
// Draws each voice waveform from its list of levels (0 to 132).
document.querySelectorAll(".wave").forEach((svg) => {
  const bars = svg.dataset.levels.split(" ").map((level, i) => {
    const length = Math.max(level / 3 - 6, 0.01);
    return `M${3 + i * 8.25} ${22 - length / 2}v${length}`;
  });
  const path = document.createElementNS("http://www.w3.org/2000/svg", "path");
  path.setAttribute("d", bars.join(""));
  svg.append(path);
});
```
